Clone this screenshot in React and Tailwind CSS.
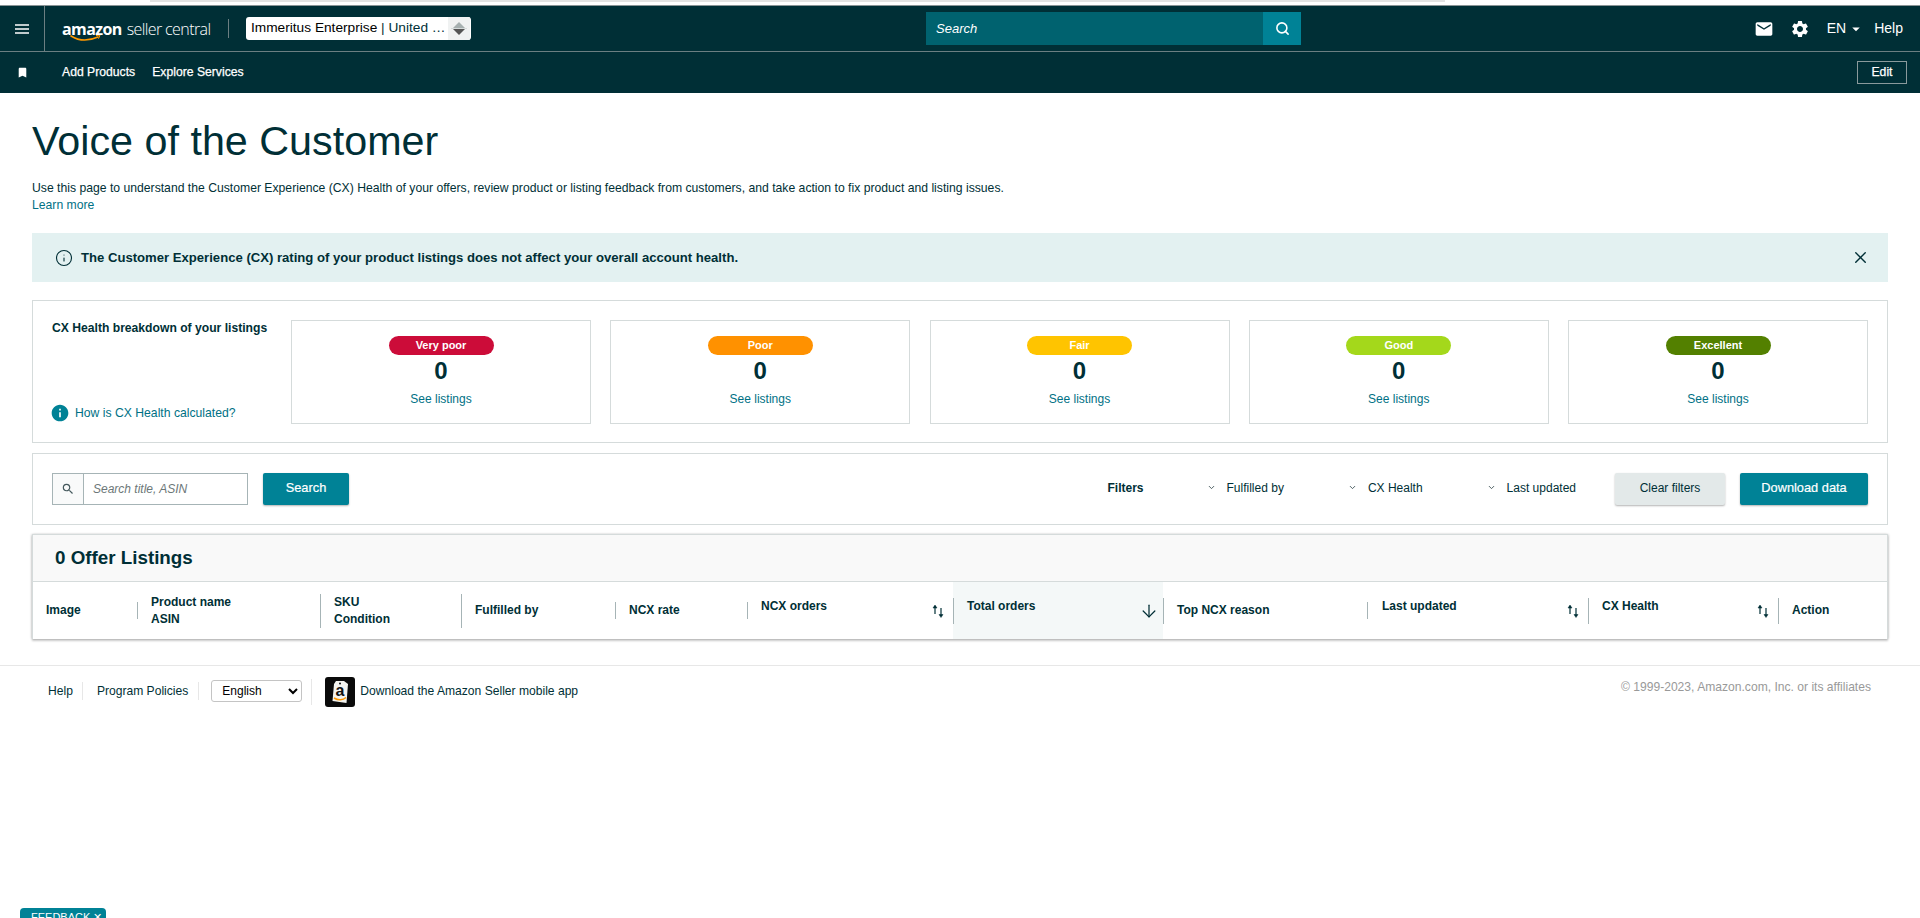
import React from 'react';
import { Search, X, Info, ChevronDown, ArrowDown } from 'lucide-react';
import { MdBookmark, MdMail, MdSettings, MdInfo, MdArrowDropDown, MdSearch } from 'react-icons/md';

const FONT = "font-['Liberation_Sans',Arial,sans-serif]";

const healthCards = [
  { label: 'Very poor', color: 'bg-[#CC0C39]' },
  { label: 'Poor', color: 'bg-[#FF9100]' },
  { label: 'Fair', color: 'bg-[#FFC400]' },
  { label: 'Good', color: 'bg-[#A4D81B]' },
  { label: 'Excellent', color: 'bg-[#538000]' },
];

const SortIcon = () => (
  <svg width="12" height="14" viewBox="0 0 12 14" fill="none" stroke="#002F36" strokeWidth="1.2">
    <path d="M3 10V2" />
    <path d="M1 4l2-3 2 3z" fill="#002F36" strokeWidth="0.5" />
    <path d="M9 4v8" />
    <path d="M7 10.500l2 3 2-3z" fill="#002F36" strokeWidth="0.5" />
  </svg>
);

const Logo = () => (
  <div className="relative w-[150px] h-[24px] flex items-baseline text-white font-['Open_Sans',sans-serif]">
    <span className="text-[16px] font-bold tracking-[-0.6px] leading-[24px]">amazon</span>
    <span className="text-[16px] font-light tracking-[-0.6px] leading-[24px] ml-[5px] whitespace-nowrap">seller central</span>
    <svg className="absolute left-[8px] top-[18px]" width="32" height="7" viewBox="0 0 32 7" fill="none">
      <path d="M1 1c8 5 18 5 27 1" stroke="#FF9900" strokeWidth="1.6" strokeLinecap="round" />
      <path d="M26 .5l4-.3-1.5 3.500" stroke="#FF9900" strokeWidth="1" />
    </svg>
  </div>
);

const AppIcon = () => (
  <svg width="30" height="30" viewBox="0 0 30 30">
    <rect width="30" height="30" rx="3" fill="#0a0a0a" />
    <path d="M11 4h8l4 3-1.5 19-14-2L9 7z" fill="#f4f4f0" />
    <circle cx="15" cy="6.500" r="1" fill="#0a0a0a" />
    <text x="15" y="19" textAnchor="middle" fontFamily="'Liberation Sans', sans-serif" fontWeight="700" fontSize="16" fill="#111">a</text>
    <path d="M9 21c4 2.500 9 2.500 12-.5" stroke="#FF9900" strokeWidth="1.500" fill="none" />
  </svg>
);

const NavBar = () => (
  <div className="bg-[#002F36] text-white">
    <div className="h-[46px] flex items-center border-b border-[#6B7F82]">
      <div className="w-[45px] h-full flex items-center justify-center border-r border-[#6B7F82]">
        <svg width="14" height="10" viewBox="0 0 14 10" stroke="white" strokeWidth="1.5">
          <path d="M0 1h14M0 5h14M0 9h14" />
        </svg>
      </div>
      <div className="w-[183px] pl-[17px] flex items-center"><Logo /></div>
      <div className="w-px h-[19px] bg-[#6B7F82]" />
      <div className="ml-[17px] w-[225px] h-[23px] bg-white rounded-[3px] flex items-center text-[13.7px] pl-[5px] text-black overflow-hidden">
        <span className="flex-1 whitespace-nowrap">Immeritus Enterprise <span className="text-[#002F36]">| United …</span></span>
        <div className="w-[22px] h-full bg-[#F0F2F2] flex flex-col items-center justify-center mr-[1px]">
          <div className="w-0 h-0 border-l-[6px] border-r-[6px] border-b-[6px] border-l-transparent border-r-transparent border-b-[#A6B0B0]" />
          <div className="w-[16px] h-px bg-[#D5DBDB]" />
          <div className="w-0 h-0 border-l-[6px] border-r-[6px] border-t-[6px] border-l-transparent border-r-transparent border-t-[#555]" />
        </div>
      </div>
      <div className="ml-[455px] w-[375px] h-[33px] bg-[#00626F] flex items-center">
        <span className="flex-1 pl-[10px] text-[13px] italic">Search</span>
        <div className="w-[38px] h-full bg-[#008296] flex items-center justify-center">
          <Search size={15} strokeWidth={2.5} />
        </div>
      </div>
      <div className="ml-auto flex items-center pr-[17px]">
        <MdMail size={20} className="mr-[16px]" />
        <MdSettings size={20} className="mr-[17px]" />
        <span className="text-[14px]">EN</span>
        <MdArrowDropDown size={18} className="ml-[1px] mr-[9px]" />
        <span className="text-[14px]">Help</span>
      </div>
    </div>
    <div className="h-[41px] flex items-center text-[12.2px] [-webkit-text-stroke:0.25px_white]">
      <div className="w-[62px] flex justify-center pr-[17px]"><MdBookmark size={13} /></div>
      <span>Add Products</span>
      <span className="ml-[17px]">Explore Services</span>
      <div className="ml-auto mr-[13px] w-[50px] h-[23px] border border-[#8A9A9C] flex items-center justify-center">Edit</div>
    </div>
  </div>
);

const HealthPanel = () => (
  <div className="mt-[18px] h-[143px] border border-[#D5DBDB] flex pt-[19px] pl-[19px] pr-[19px]">
    <div className="w-[239px] h-[103px] flex flex-col justify-between">
      <span className="font-bold -mt-[1px] text-[12.15px]">CX Health breakdown of your listings</span>
      <div className="flex items-center gap-[6px] text-[12.2px] text-[#007185]">
        <MdInfo size={20} className="text-[#008296] -ml-[2px] -mr-[1px]" />
        <span>How is CX Health calculated?</span>
      </div>
    </div>
    <div className="flex gap-[19.25px]">
      {healthCards.map((card) => (
        <div key={card.label} className="w-[300px] h-[104px] border border-[#D5DBDB] flex flex-col items-center pt-[15px]">
          <div className={`w-[105px] h-[19px] rounded-full text-white text-[11px] font-bold flex items-center justify-center ${card.color}`}>
            {card.label}
          </div>
          <div className="text-[24px] font-bold leading-[28px] mt-[2px]">0</div>
          <a className="text-[12px] text-[#007185] mt-[5px]">See listings</a>
        </div>
      ))}
    </div>
  </div>
);

const FilterItem = ({ label, className }) => (
  <div className={`flex items-center mb-[2px] ${className}`}>
    <ChevronDown size={9} strokeWidth={2.5} className="text-[#44585C] mr-[11px]" />
    <span>{label}</span>
  </div>
);

const SearchPanel = () => (
  <div className="mt-[10px] h-[72px] border border-[#D5DBDB] flex items-center pl-[19px] pr-[19px] pb-[1px] text-[12px]">
    <div className="w-[196px] h-[32px] border border-[#A6B4B6] flex">
      <div className="w-[31px] bg-[#F9FAFA] border-r border-[#A6B4B6] flex items-center justify-center">
        <MdSearch size={14} className="text-[#44585C]" />
      </div>
      <span className="flex items-center pl-[9px] italic text-[#6C7778]">Search title, ASIN</span>
    </div>
    <button className="ml-[15px] w-[86px] h-[32px] pb-[2px] bg-[#008296] text-white text-[12.8px] [-webkit-text-stroke:0.2px_white] rounded-[2px] shadow-[0_1px_2px_rgba(0,0,0,0.3)]">Search</button>
    <span className="ml-auto mb-[2px] font-bold">Filters</span>
    <FilterItem label="Fulfilled by" className="ml-[63px]" />
    <FilterItem label="CX Health" className="ml-[64px]" />
    <FilterItem label="Last updated" className="ml-[64px]" />
    <button className="ml-[39px] w-[110px] h-[32px] pb-[2px] bg-[#E3E9E9] rounded-[2px] shadow-[0_1px_2px_rgba(0,0,0,0.3)]">Clear filters</button>
    <button className="ml-[15px] w-[128px] h-[32px] pb-[2px] bg-[#008296] text-white text-[12.8px] [-webkit-text-stroke:0.2px_white] rounded-[2px] shadow-[0_1px_2px_rgba(0,0,0,0.3)]">Download data</button>
  </div>
);

const columns = [
  { w: 'w-[104px]', pad: 'pl-[13px]', lines: ['Image'] },
  { w: 'w-[183px]', pad: 'pl-[13px]', divider: 'h-[17px]', lines: ['Product name', 'ASIN'] },
  { w: 'w-[141px]', pad: 'pl-[13px]', divider: 'h-[34px]', lines: ['SKU', 'Condition'] },
  { w: 'w-[154px]', pad: 'pl-[13px]', divider: 'h-[34px]', lines: ['Fulfilled by'] },
  { w: 'w-[132px]', pad: 'pl-[13px]', divider: 'h-[17px]', lines: ['NCX rate'] },
  { w: 'w-[206px]', pad: 'pl-[13px]', divider: 'h-[17px]', lines: ['NCX orders'], up: true, sort: true },
  { w: 'w-[210px]', pad: 'pl-[13px]', divider: 'h-[26px]', lines: ['Total orders'], up: true, active: true },
  { w: 'w-[204px]', pad: 'pl-[13px]', divider: 'h-[26px]', lines: ['Top NCX reason'] },
  { w: 'w-[221px]', pad: 'pl-[14px]', divider: 'h-[17px]', lines: ['Last updated'], up: true, sort: true },
  { w: 'w-[190px]', pad: 'pl-[13px]', divider: 'h-[26px]', lines: ['CX Health'], up: true, sort: true },
  { w: 'flex-1', pad: 'pl-[13px]', divider: 'h-[26px]', lines: ['Action'] },
];

const ListingsTable = () => (
  <div className="mt-[9px] border border-[#D5DBDB] border-b-0 shadow-[0_2px_2px_rgba(0,0,0,0.2),1px_0_2px_rgba(0,0,0,0.12),-1px_0_2px_rgba(0,0,0,0.12)]">
    <div className="h-[47px] bg-[#F9F9F9] border-b border-[#D5DBDB] flex items-center pl-[22px] text-[18.8px] font-bold">0 Offer Listings</div>
    <div className="h-[57px] flex items-center text-[12px] font-bold">
      {columns.map((col) => (
        <div key={col.lines[0]} className={`${col.w} h-full flex items-center ${col.active ? 'bg-[#F4F8F8]' : ''}`}>
          {col.divider && <div className={`w-px shrink-0 bg-[#A6B4B6] ${col.divider}`} />}
          <div className={`flex-1 flex flex-col ${col.pad} ${col.up ? 'mb-[8px]' : ''} leading-[17px]`}>
            {col.lines.map((l) => <span key={l}>{l}</span>)}
          </div>
          {col.sort && <div className="pr-[9px]"><SortIcon /></div>}
          {col.active && <ArrowDown size={20} strokeWidth={1.5} className="mr-[4px]" />}
        </div>
      ))}
    </div>
  </div>
);

const Footer = () => (
  <div className="mt-[26px] border-t border-[#E7E7E7] h-[60px] flex items-start pt-[13px] pl-[48px] pr-[49px] text-[12.1px]">
    <span className="mt-[3px]">Help</span>
    <div className="w-px h-[18px] bg-[#E7E7E7] mx-[9px] mt-[3px]" />
    <span className="ml-[5px] mt-[3px]">Program Policies</span>
    <div className="w-px h-[18px] bg-[#E7E7E7] ml-[10px] mt-[3px]" />
    <select className="ml-[12px] w-[91px] h-[22px] border border-[#C4C4C4] rounded-[3px] pl-[6px] text-[12px] text-black bg-white mt-[1px]">
      <option>English</option>
    </select>
    <div className="w-px h-[26px] bg-[#E7E7E7] ml-[9px]" />
    <div className="ml-[13px] -mt-[2px]"><AppIcon /></div>
    <span className="ml-[5px] mt-[3px]">Download the Amazon Seller mobile app</span>
    <span className="ml-auto text-[#999] -mt-[1px]">© 1999-2023, Amazon.com, Inc. or its affiliates</span>
  </div>
);

export default function App() {
  return (
    <div className={`relative h-[918px] overflow-hidden bg-white text-[#002F36] ${FONT}`}>
      <div className="h-[6px] bg-white border-b border-[#8A9496]">
        <div className="ml-[150px] w-[1295px] h-[2px] bg-[#E3E3E3]" />
      </div>
      <NavBar />
      <div className="pl-[32px] pr-[32px]">
        <h1 className="mt-[24px] text-[41.3px] leading-[48px]">Voice of the Customer</h1>
        <p className="mt-[15px] text-[12.2px] leading-[17px]">
          Use this page to understand the Customer Experience (CX) Health of your offers, review product or listing feedback from customers, and take action to fix product and listing issues.
          <br />
          <a className="text-[#007185]">Learn more</a>
        </p>
        <div className="mt-[19px] h-[49px] bg-[#E3F1F1] flex items-center pl-[23px] pr-[18px] text-[13.12px] font-bold">
          <Info size={18} strokeWidth={1.5} className="mr-[8px]" />
          <span>The Customer Experience (CX) rating of your product listings does not affect your overall account health.</span>
          <X size={19} strokeWidth={1.75} className="ml-auto" />
        </div>
        <HealthPanel />
        <SearchPanel />
        <ListingsTable />
      </div>
      <Footer />
      <div className="absolute left-[20px] top-[908px] w-[86px] h-[20px] bg-[#008296] rounded-[4px] text-white text-[11px] pl-[11px] pt-[1px]">FEEDBACK ✕</div>
    </div>
  );
}
